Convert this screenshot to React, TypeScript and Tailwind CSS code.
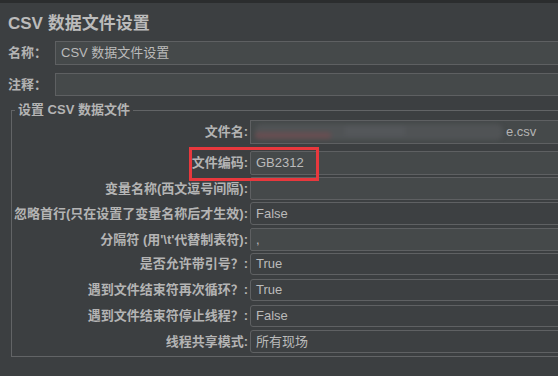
import React from 'react'

type Row = {
  label: string
  value?: string
  kind: 'text' | 'combo' | 'file'
  gap: string
  h: string
}

const ROWS: Row[] = [
  { label: '文件名:', kind: 'file', gap: 'mt-[2px]', h: 'h-[24px]' },
  { label: '文件编码:', value: 'GB2312', kind: 'text', gap: 'mt-[7px]', h: 'h-[24px]' },
  { label: '变量名称(西文逗号间隔):', value: '', kind: 'text', gap: 'mt-[2px]', h: 'h-[23px]' },
  { label: '忽略首行(只在设置了变量名称后才生效):', value: 'False', kind: 'combo', gap: 'mt-[2px]', h: 'h-[23px]' },
  { label: "分隔符 (用'\\t'代替制表符):", value: ',', kind: 'text', gap: 'mt-[3px]', h: 'h-[23px]' },
  { label: '是否允许带引号？:', value: 'True', kind: 'combo', gap: 'mt-[2px]', h: 'h-[22px]' },
  { label: '遇到文件结束符再次循环？:', value: 'True', kind: 'combo', gap: 'mt-[4px]', h: 'h-[22px]' },
  { label: '遇到文件结束符停止线程？:', value: 'False', kind: 'combo', gap: 'mt-[4px]', h: 'h-[22px]' },
  { label: '线程共享模式:', value: '所有现场', kind: 'combo', gap: 'mt-[3px]', h: 'h-[23px]' },
]

function Field({ row }: { row: Row }) {
  if (row.kind === 'file') {
    // redacted path, blurred in the screenshot
    return (
      <div className="flex-1 h-full flex items-center bg-[#45494a] border border-[#5e6062] pl-[6px] overflow-hidden">
        <div className="relative w-[248px] h-[16px] ml-[-2px] blur-[2px]">
          <div className="absolute inset-0 rounded-[7px] bg-[#505355]" />
          <div className="absolute left-0 bottom-[1px] w-[76px] h-[7px] rounded-[3px] bg-[#664e51]" />
          <div className="absolute left-[90px] top-[2px] w-[60px] h-[10px] bg-[#54575a]" />
        </div>
        <span className="ml-[3px] text-[13px] text-[#b4b4b4]">e.csv</span>
      </div>
    )
  }
  if (row.kind === 'combo') {
    return (
      <div className="flex-1 h-full flex items-center bg-[#3d4042] border border-[#5f6163] rounded-[3px] pl-[5px] text-[13px] text-[#bbbbbb]">
        {row.value}
      </div>
    )
  }
  return (
    <div className="flex-1 h-full flex items-center bg-[#45494a] border border-[#5e6062] rounded-[2px] pl-[5px] text-[13px] text-[#bbbbbb]">
      {row.value}
    </div>
  )
}

export default function App() {
  return (
    <div
      className="relative w-[558px] h-[376px] overflow-hidden bg-[#3c3f41] text-[#bbbbbb]"
      style={{ fontFamily: '"Liberation Sans", "Noto Sans CJK SC", sans-serif' }}
    >
      <div className="h-[3px] bg-[#2b2d2e]" />
      <div className="pl-[8px]">
        <div className="mt-[11px] h-[20px] leading-[20px] text-[17px] font-bold text-[#bbbbbb]">CSV 数据文件设置</div>

        <div className="mt-[7px] h-[24px] flex items-center">
          <span className="w-[47px] text-[13px] font-bold text-[#b4b4b4]">名称：</span>
          <div className="flex-1 h-full flex items-center bg-[#45494a] border border-[#5e6062] pl-[5px] text-[13px] mr-[-4px]">
            CSV 数据文件设置
          </div>
        </div>

        <div className="mt-[8px] h-[23px] flex items-center">
          <span className="w-[47px] text-[13px] font-bold text-[#b4b4b4]">注释：</span>
          <div className="flex-1 h-full bg-[#45494a] border border-[#5e6062] mr-[-4px]" />
        </div>

        <fieldset className="mt-[6px] ml-[3px] w-[600px] border border-[#626466] pb-[3px]">
          <legend className="ml-[3px] px-[3px] leading-[16px] text-[13px] font-bold text-[#b4b4b4]">设置 CSV 数据文件</legend>
          {ROWS.map((row) => (
            <div key={row.label} className={'flex items-center ' + row.gap + ' ' + row.h}>
              <span className="w-[238px] pr-[2px] text-right text-[13px] font-bold text-[#b4b4b4] whitespace-nowrap">
                {row.label}
              </span>
              <Field row={row} />
            </div>
          ))}
        </fieldset>
      </div>

      <div className="absolute left-[189px] top-[147px] w-[130px] h-[34px] border-[3px] border-[#e8383d]" />
    </div>
  )
}
